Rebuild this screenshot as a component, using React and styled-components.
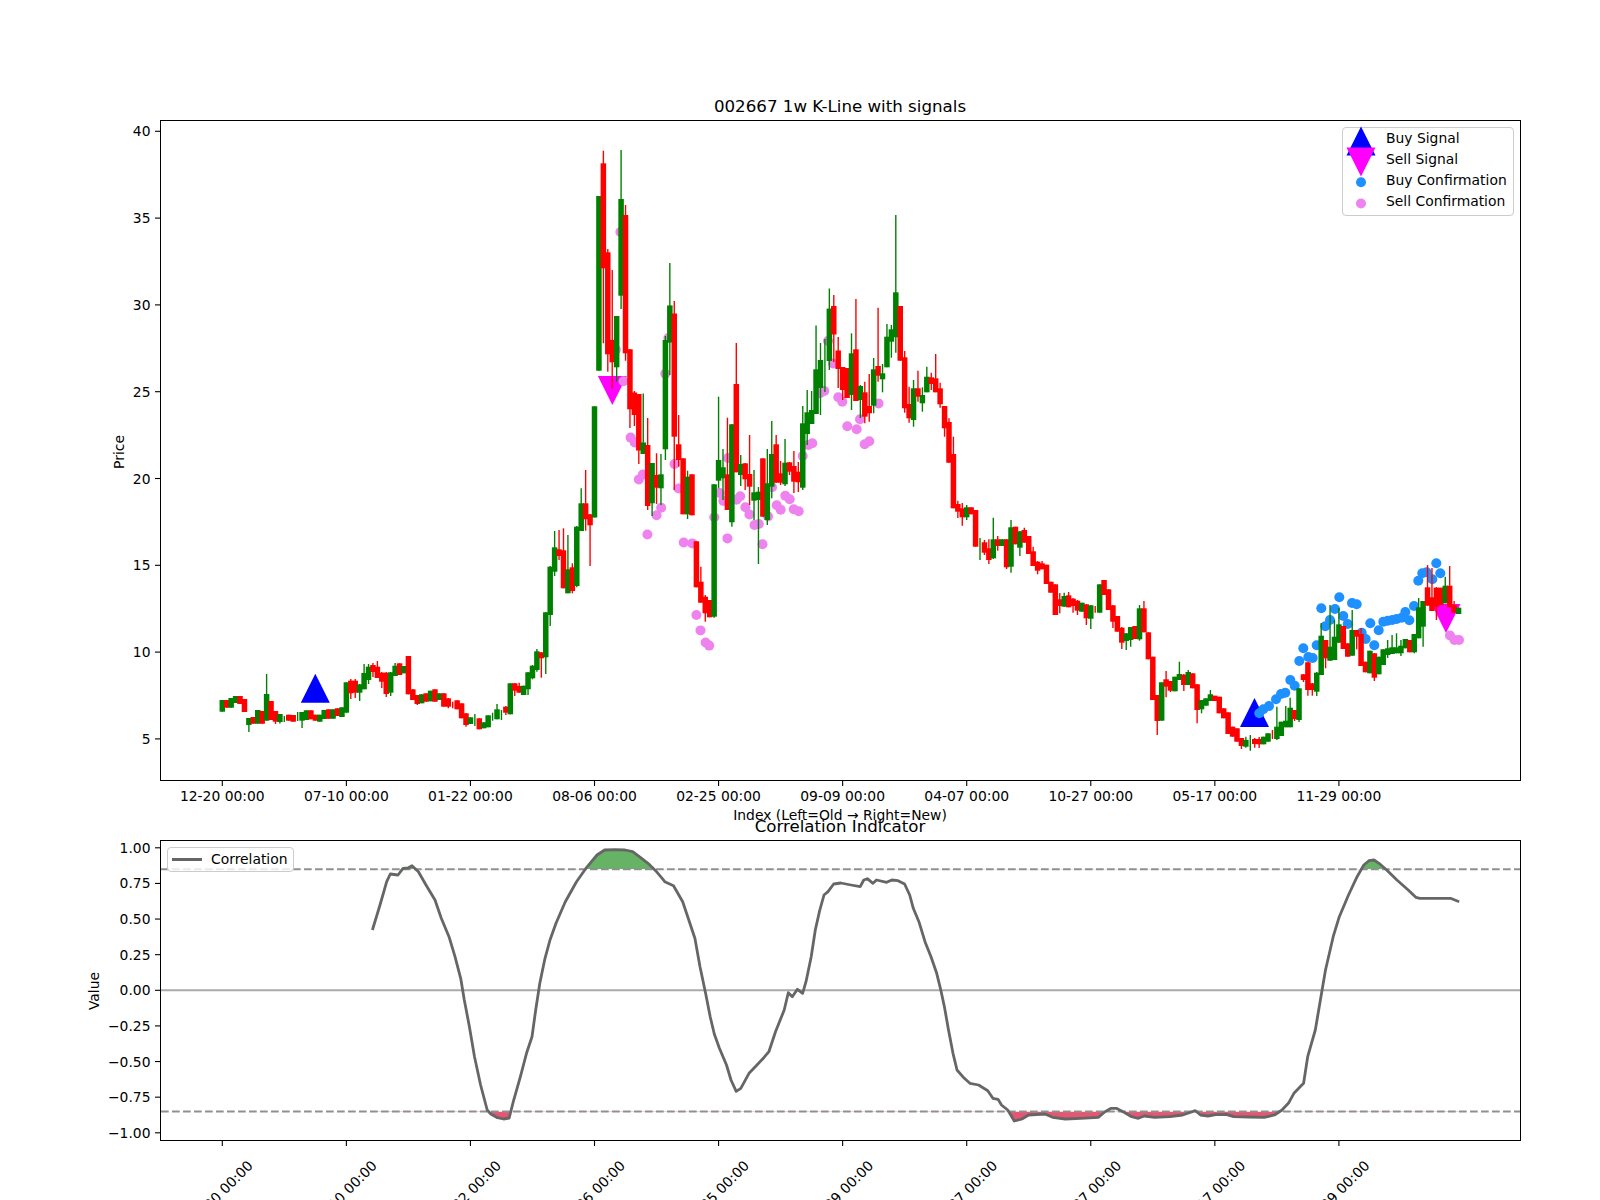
import React from 'react';
import styled, { createGlobalStyle } from 'styled-components';

const GlobalStyle = createGlobalStyle`
  html, body {
    margin: 0;
    padding: 0;
    background: #fff;
  }
`;

// candle x on the page, 280 bars
const barX = (i) => 222.3 + 4.431 * i;

const priceY = (p) => 738.9 - (p - 5) * 17.36;
const valueY = (v) => 990.3 - v * 142.5;

// [colour, body top, body bottom, wick top, wick bottom], all in page pixels
const CANDLES = [
  ['g', 700, 711.7], ['r', 700, 707.7], ['g', 698, 707.7], ['g', 696, 703], ['r', 696, 704],
  ['r', 699, 712], ['g', 718, 725, 718, 732], ['r', 717, 723.7], ['g', 710, 723.7], ['r', 711, 723.7],
  ['g', 694, 720.7, 674], ['r', 701, 720], ['r', 711, 721.7, 711, 724], ['g', 714, 722, 714, 723.5], ['g', 719, 719, 716, 722],
  ['r', 714.7, 720.7], ['r', 715, 721.7], ['g', 716, 716, 712, 721], ['g', 712, 720.7, 712, 728], ['g', 710.3, 720],
  ['r', 710.3, 719.3], ['r', 714.7, 720.7], ['g', 714.7, 721.7], ['g', 710, 719], ['r', 709.3, 718.7],
  ['g', 709.3, 718.7], ['r', 708.3, 716], ['g', 707.3, 717], ['g', 682.3, 712.7], ['r', 680.7, 693.3, 679, 699],
  ['r', 680.7, 692.7, 679, 698], ['g', 684.3, 692.7, 684, 701], ['g', 673, 689.3, 664], ['g', 666.7, 680, 664, 684], ['r', 665, 672, 663, 677],
  ['r', 666.7, 678, 661], ['r', 672.7, 681.7, 672, 688], ['r', 672.7, 694, 672, 697], ['g', 672.3, 692.7, 672, 696], ['g', 665.7, 676, 663],
  ['r', 663.3, 675], ['g', 666, 673.3], ['r', 656, 694.3], ['r', 689.3, 700], ['r', 695, 704, 695, 705],
  ['g', 694.3, 703.3], ['r', 693.3, 701.7], ['g', 690.7, 701.3], ['r', 689.3, 701.7], ['g', 693.3, 700],
  ['r', 693.3, 706.7], ['r', 698.3, 706.7, 698, 708.3], ['r', 704, 704, 701.7, 708.3], ['r', 700.3, 709.3], ['r', 703.3, 718.3],
  ['r', 713.3, 725, 713, 726.7], ['g', 717.3, 724], ['g', 720, 720, 714, 726], ['r', 718.3, 729.3], ['g', 722.3, 728.3],
  ['g', 715.3, 727.3], ['g', 716, 716, 712.7, 720.7], ['g', 709.3, 719.3, 704], ['g', 715, 715, 710, 720], ['r', 706.7, 712.7, 706, 715],
  ['g', 683.3, 714.3], ['r', 683.3, 690.7, 683, 696], ['r', 686, 692.7, 682.7], ['g', 685.7, 695], ['g', 672.3, 689.3, 672, 695],
  ['g', 665.7, 678.3, 665, 679.3], ['g', 651.3, 670, 649, 671.7], ['r', 652.3, 658.3, 652, 677.7], ['g', 612.3, 657.3, 612, 674], ['g', 566.7, 615, 566, 626],
  ['g', 547.3, 571.7, 531, 576], ['r', 549.3, 556, 530, 560], ['r', 550.3, 588.3, 528.3], ['g', 569.3, 593.3, 535], ['r', 567.3, 591, 563.3, 593.3],
  ['g', 526.7, 586, 526, 587.3], ['g', 503.3, 531, 488.3], ['r', 503.3, 519.3, 470, 530.7], ['r', 514.3, 525.3, 514, 566], ['g', 406.3, 517.5],
  ['g', 196, 370.7], ['r', 163.3, 268.3, 150.7, 343.3], ['r', 252.3, 354.3, 249, 371.7], ['r', 340, 362.3, 270, 388.3], ['g', 316, 367.3, 316, 381.7],
  ['g', 199, 295.7, 150, 309], ['r', 215, 353.3, 205, 360.7], ['r', 349.3, 409.3, 349, 428], ['r', 392.5, 415, 391, 426], ['r', 394, 450.5, 394, 464],
  ['g', 442.5, 454, 393.4], ['r', 445, 506, 418, 510], ['g', 463, 503.3, 463, 516], ['r', 475, 487.7, 453.3, 504], ['g', 474.3, 488.3, 454, 505],
  ['g', 340, 449.3, 336, 460], ['g', 305.4, 342.5, 263, 375], ['r', 313.5, 436.7, 301, 490], ['r', 444.3, 460, 415, 466.7], ['r', 458.3, 514.3],
  ['g', 476.7, 514.3, 470.7, 519], ['r', 474.3, 515.3], ['r', 541.3, 587.3], ['r', 581.7, 602.7, 566.7], ['r', 596.7, 613.3, 595, 621.7],
  ['r', 600, 617.3], ['g', 484.3, 616.7, 484, 617.7], ['g', 460, 480.7, 396.7, 488.3], ['g', 467.3, 478.3, 449, 500], ['r', 474.3, 510, 417.7],
  ['g', 424.3, 522.3, 424, 526.7], ['r', 384, 472.3, 343], ['g', 464, 475, 455, 486], ['r', 463.3, 479.3, 463, 490], ['r', 474, 486.7, 435, 505],
  ['g', 492.3, 500.7, 470, 520], ['g', 491.7, 500, 487, 564], ['r', 458.3, 516.7], ['g', 483.3, 520, 449, 525], ['g', 454, 486.7, 421, 498.3],
  ['r', 444.3, 482.7, 435], ['r', 473.3, 482.7, 461, 485], ['g', 462.7, 484.3, 439, 486], ['r', 462.3, 471.7, 462, 475], ['r', 466, 481.7, 451, 493],
  ['r', 471.7, 482.3, 462, 492], ['g', 423.3, 487.7, 406, 490], ['g', 412.3, 434, 390, 445], ['g', 410, 424, 391], ['g', 369.3, 414, 325.5],
  ['g', 360, 388, 343, 415], ['g', 365, 365, 339, 392], ['g', 308.6, 361, 288.5, 370], ['r', 306, 334.5, 295, 362], ['r', 350.5, 369, 337, 388],
  ['r', 367, 390, 367, 400], ['r', 368, 398], ['g', 353.3, 395, 333.3, 410], ['r', 349.3, 401, 299], ['g', 386, 400, 385, 418],
  ['r', 392.3, 416.7, 381.7, 423.3], ['r', 406, 413.3, 374, 421.7], ['g', 369.3, 405.7, 358, 413.3], ['r', 366, 375.7, 307.7, 381.7], ['g', 373.3, 379.3, 364, 392.3],
  ['g', 336.7, 367.3, 324], ['g', 329.3, 341.7, 325, 357.7], ['g', 292.3, 337.3, 215, 352.7], ['r', 306, 360.7], ['r', 357.3, 408.3, 351, 412.7],
  ['r', 404, 418.3, 386.7, 422.7], ['g', 388.3, 420, 380, 426.7], ['r', 388.3, 396.7, 370.7, 401.7], ['g', 395, 403.3, 387.3, 411.7], ['g', 376.7, 392.3, 366.7],
  ['r', 377.3, 384, 372.7, 390], ['r', 378.3, 392.3, 354], ['r', 388.3, 404.3, 382.7, 407.7], ['r', 406, 428.3, 406, 436.7], ['r', 422, 462.7, 418.3],
  ['r', 454, 508.3, 436.7], ['r', 504, 511.7, 500.7, 518], ['r', 508.3, 517.3, 503, 525.7], ['g', 507.3, 517.3, 505, 520], ['r', 507.3, 514.3],
  ['r', 510, 546.7], ['g', 550, 550, 538, 560], ['r', 542.3, 552.7, 540, 555], ['r', 548.3, 560, 539.3, 564], ['g', 539.3, 558.3, 517.7, 559],
  ['r', 539.3, 546, 536, 550.7], ['g', 539.3, 546], ['r', 539.3, 567.3, 539, 569], ['g', 527.3, 566.7, 520, 572.7], ['r', 526.7, 544.3],
  ['g', 531.3, 547.7, 531, 556], ['r', 530, 542.7, 527.7], ['r', 536, 554], ['r', 551.3, 566, 546.7], ['r', 561.7, 570.7, 561, 574.3],
  ['r', 563.3, 569.3, 561], ['r', 564.7, 584], ['r', 581.7, 592.7], ['r', 584.3, 615], ['r', 599.3, 606, 593, 613.3],
  ['g', 596, 606.7, 592.7], ['r', 595.3, 607.3, 592], ['r', 598.7, 606, 598, 612.7], ['r', 600.7, 610.7, 600, 615], ['g', 602.7, 611.7],
  ['r', 604.3, 618.3, 604, 625], ['g', 605.3, 618.7, 605, 629], ['r', 609, 609, 606, 612.7], ['g', 584.3, 612.7], ['r', 580, 595],
  ['r', 589.3, 610], ['r', 605.3, 621.7, 605, 628], ['r', 616, 631.7], ['r', 627.7, 642.7, 627, 649], ['g', 633.3, 641, 633, 650],
  ['g', 627, 640, 627, 646.7], ['r', 626, 639], ['g', 608.3, 639.3, 605, 640.7], ['r', 608.3, 632.3, 601], ['r', 632.3, 659.3],
  ['r', 656.7, 700], ['r', 695, 721, 695, 735], ['g', 682.3, 720.7], ['r', 679.3, 686.7, 671, 697.3], ['r', 681, 690.7, 681, 692],
  ['g', 676.7, 691.3], ['g', 674, 680, 661.7], ['r', 674.7, 685, 674, 691], ['g', 672, 685, 670], ['r', 673.3, 688.3],
  ['r', 684.3, 710, 684, 723.3], ['g', 700, 709.3, 700, 713.3], ['g', 698.3, 705.7], ['g', 694.3, 701, 690], ['r', 695.7, 701],
  ['r', 696.7, 713.3], ['r', 708.3, 718.3], ['r', 712.3, 734], ['r', 726.7, 736.7], ['r', 728.3, 741.7],
  ['r', 738, 746, 738, 749], ['g', 740, 746.7, 736.7, 747.7], ['g', 742, 742, 735, 750.7], ['r', 739, 744, 738, 747.7], ['r', 739, 744.3, 737, 748],
  ['g', 736.7, 744.3], ['g', 733.3, 741.7], ['r', 735, 735, 730, 739], ['g', 726.7, 739, 706.7, 740], ['g', 721.7, 736],
  ['g', 720.7, 727.3, 706], ['g', 707.7, 727.3, 697.7], ['r', 710, 719, 710, 721], ['g', 688.3, 720, 688, 722], ['r', 674.3, 680, 674, 682],
  ['r', 662.3, 690, 662, 695.7], ['r', 683.3, 690, 683, 695.7], ['g', 672.7, 691.7, 672, 696], ['g', 635.7, 675, 623], ['r', 640, 658.3, 640, 668.3],
  ['g', 646.7, 660.7, 605], ['g', 636.7, 660, 620], ['g', 624.3, 642.7, 608], ['r', 626, 649], ['r', 643.3, 656.7],
  ['g', 630, 655.7, 610], ['r', 630, 636.7, 630, 649.3], ['r', 634, 666, 628], ['r', 661.7, 672.3], ['g', 650.7, 673.3],
  ['r', 653.3, 677.7, 653, 681], ['g', 656.7, 674.3], ['g', 649.3, 665], ['g', 648.3, 655, 640, 658], ['g', 647.3, 654, 635],
  ['g', 647.3, 653.3, 633.3], ['g', 645.7, 653.3, 640, 656], ['g', 639, 648.3], ['r', 640, 652.3], ['g', 634, 652.3, 634, 653.3],
  ['g', 607.3, 638.3, 598], ['g', 601, 626.7, 601, 646.7], ['r', 587.3, 605.7, 565], ['r', 597.3, 611, 568], ['r', 587.7, 606.7, 587, 620],
  ['r', 587.7, 605], ['g', 585.7, 603.3, 576.7], ['r', 585.7, 607.3, 566], ['r', 605, 612.7, 601], ['g', 607.7, 614],
];

// confirmation dots on the candle chart, page pixels
const SELL_DOTS = [
  [620.4, 232], [615.8, 349.6], [623.5, 381.3], [630.6, 437.6], [634.7, 442.5], [638.8, 479.5], [642.9, 474.6], [647.4, 534.5],
  [656.6, 515.3], [661.2, 507.7], [665.3, 373.8], [668.4, 338], [674.5, 464], [678.6, 488.5], [683.7, 542.5], [692.3, 543.4],
  [696.4, 615], [700.5, 630.4], [705.6, 642.5], [709.2, 645.6], [714.3, 517.3], [719.6, 493], [723.4, 501], [727.4, 538.4],
  [728, 458], [736.5, 499.8], [740.2, 496.3], [745.4, 507.2], [749.4, 514.4], [754.5, 525], [758.8, 524], [762.5, 544.3],
  [768, 516.4], [772, 487.2], [776.7, 505.3], [780.7, 509.7], [785.3, 495.7], [789.7, 499.3], [793.7, 509.3], [798.7, 511.3],
  [802.7, 456], [808.3, 445], [812.3, 443.3], [820, 393.3], [824.3, 391], [828, 341], [833, 363.5], [838.3, 397.3],
  [842.3, 401.7], [847.3, 426.3], [856.7, 429.3], [860, 419.3], [864.7, 444.3], [869.3, 441.3], [878.5, 403.4],
  [1450, 635.5], [1454.5, 640], [1459, 640],
];

const BUY_DOTS = [
  [1259.3, 713.3], [1263.3, 709.3], [1269, 706], [1276, 699.3], [1281, 694], [1285.3, 692.7], [1290.3, 680], [1294.7, 685.7],
  [1299.3, 661], [1303.3, 648.3], [1308.3, 657], [1312.7, 658], [1316.7, 645.3], [1321.3, 608.3], [1325.3, 626.3], [1330, 620],
  [1335, 609], [1339.3, 597.3], [1343.3, 616], [1347.7, 624], [1352, 603], [1356.7, 604.3], [1361.7, 632.7], [1365.7, 639],
  [1370.3, 623.3], [1374.3, 645.3], [1378.7, 630.3], [1383.3, 621.7], [1387.7, 620.7], [1392.3, 620], [1396.7, 619], [1401.7, 617.7],
  [1405.3, 612], [1409.3, 620.3], [1414, 606], [1418.3, 580.7], [1422.3, 573.3], [1426.7, 572.3], [1432.3, 579.3], [1436.3, 563.3],
  [1440.3, 573.3],
];

// correlation line, page pixels
const CORR = [
  [372.4, 930], [380, 905], [386.7, 881.7], [390.3, 874], [398, 875], [403, 868.3], [408, 868], [412, 865.7], [418.4, 871.7],
  [426, 885], [435, 900], [441.3, 918.3], [449, 936.7], [455, 956.7], [460.7, 978.3], [464.3, 1000], [469.4, 1026.7],
  [474.5, 1056.7], [480.6, 1085], [487.2, 1110], [490.8, 1114], [497.4, 1117.7], [503.6, 1119], [509.2, 1118], [513.3, 1101.7],
  [520.4, 1076.7], [526.5, 1053.3], [532, 1036.7], [535.7, 1010], [539.8, 983.3], [545, 958.3], [550, 940], [556, 923.3],
  [565.3, 901.7], [576.5, 881.7], [586.7, 867.3], [597, 855], [604.6, 850], [614.8, 849.7], [625, 850], [632.7, 851.7],
  [640.3, 857.3], [648, 863.3], [655.6, 870.7], [660.7, 876.7], [664.8, 881.7], [673.5, 885.7], [682.7, 901.7], [688.8, 920],
  [694.9, 938.3], [700, 966.7], [705.6, 993.3], [710.2, 1016.7], [714.3, 1034], [719.4, 1048.3], [726.5, 1065], [731, 1080],
  [736.2, 1091.3], [740.8, 1088.3], [749, 1073.3], [756, 1066], [763.8, 1057.7], [768.9, 1051.7], [775.5, 1031.7], [784.2, 1010],
  [788.3, 992.7], [792.3, 996.7], [797.4, 989.3], [802.6, 993.3], [806, 981.7], [811.2, 956.7], [815.3, 930], [819.4, 911.7],
  [824, 895], [828, 891.7], [833.7, 884], [840.8, 883], [851, 885], [860.2, 886.7], [863.8, 880], [867.3, 878.7], [873, 883.3],
  [876.5, 880], [886.7, 882.3], [891.8, 880], [898, 880.7], [904.6, 884], [909.7, 895], [913.3, 908.3], [918.9, 921.7],
  [925, 941.7], [931, 956.7], [936.7, 973.3], [940.8, 990], [944.4, 1006.7], [948.5, 1030], [953, 1053.3], [957, 1070],
  [964.3, 1078.3], [969.9, 1083.3], [978.6, 1085], [987.8, 1090.7], [992.9, 1098.3], [998, 1099.3], [1001.5, 1105], [1007.7, 1110],
  [1014.3, 1121], [1022, 1119], [1028.6, 1115], [1044.9, 1114], [1052.6, 1117.3], [1065.3, 1119], [1080.6, 1118.3], [1098.5, 1117.3],
  [1105, 1111.7], [1111.2, 1108.3], [1116.3, 1108.3], [1124, 1112.3], [1131.6, 1116.7], [1138.3, 1118.3], [1144.4, 1116], [1154.6, 1117.3],
  [1169.9, 1116.7], [1182.7, 1115], [1195.4, 1110.7], [1200.5, 1115], [1208, 1116], [1215.8, 1114.7], [1226, 1114.3], [1233.7, 1116.7],
  [1249, 1117], [1264.3, 1117.3], [1274.5, 1115], [1282, 1110], [1288.8, 1102.7], [1293.9, 1093.3], [1303.6, 1083.3], [1307.7, 1056.7],
  [1315.3, 1030], [1320.4, 1000], [1325.5, 970], [1333.2, 936.7], [1339.3, 916.7], [1348.5, 895], [1357.1, 876.7], [1363.8, 865],
  [1368.9, 860.7], [1374, 860], [1379, 863.3], [1386.7, 870], [1396.9, 880], [1408.2, 890], [1415.8, 897.3], [1419.9, 898.3],
  [1450.5, 898.3], [1459.2, 901.7],
];

const DATE_LABELS = [
  '12-20 00:00', '07-10 00:00', '01-22 00:00', '08-06 00:00', '02-25 00:00',
  '09-09 00:00', '04-07 00:00', '10-27 00:00', '05-17 00:00', '11-29 00:00',
];
const PRICE_TICKS = [5, 10, 15, 20, 25, 30, 35, 40];
const VALUE_TICKS = [1, 0.75, 0.5, 0.25, 0, -0.25, -0.5, -0.75, -1];

const COLORS = { g: '#008000', r: '#ff0000' };
const UPPER_THRESHOLD = valueY(0.85);
const LOWER_THRESHOLD = valueY(-0.85);

const Figure = styled.div`
  width: 1600px;
  height: 1200px;
  overflow: hidden;
  background: #fff;
  color: #000;
  font-family: "DejaVu Sans", "Liberation Sans", sans-serif;
  display: flex;
  flex-direction: column;
`;

const Title = styled.div`
  width: 1360px;
  height: ${(props) => props.$height}px;
  margin-left: 160px;
  padding-bottom: 3px;
  box-sizing: border-box;
  display: flex;
  align-items: flex-end;
  justify-content: center;
  font-size: 16.67px;
  line-height: 20px;
  position: relative;
  z-index: 1;
`;

const PlotFrame = styled.div`
  position: relative;
  width: 1359px;
  height: ${(props) => props.$height}px;
  margin-left: 160px;
  border: 1px solid #000;
`;

const PlotSvg = styled.svg`
  display: block;
  overflow: visible;
`;

const AxisText = styled.text`
  font-family: "DejaVu Sans", "Liberation Sans", sans-serif;
  font-size: 13.89px;
  fill: #000;
`;

const Legend = styled.div`
  position: absolute;
  top: 6px;
  ${(props) => (props.$side === 'right' ? 'right: 6px;' : 'left: 6px;')}
  box-sizing: border-box;
  width: ${(props) => props.$width}px;
  height: ${(props) => props.$height}px;
  border: 1px solid #ccc;
  border-radius: 4px;
  background: rgba(255, 255, 255, 0.8);
  display: flex;
  flex-direction: column;
  justify-content: ${(props) => (props.$side === 'right' ? 'flex-start' : 'center')};
`;

const LegendRow = styled.div`
  height: 20.9px;
  flex: none;
  display: flex;
  align-items: center;
  font-size: 13.89px;
  line-height: 20.9px;
  white-space: nowrap;
`;

const MarkerCell = styled.svg`
  flex: none;
  width: 43px;
  height: 21px;
  overflow: visible;
`;

const LegendLine = styled.span`
  flex: none;
  width: 30px;
  height: 3px;
  margin: 0 9px 0 4px;
  background: #666;
`;

const Candle = ({ bar, index }) => {
  const [color, top, bottom, high = top, low = bottom] = bar;
  const x = barX(index);
  return (
    <g>
      <line x1={x} x2={x} y1={high} y2={low} stroke={COLORS[color]} strokeWidth="1.39" />
      {bottom > top && <rect x={x - 2.75} y={top} width="5.5" height={bottom - top} fill={COLORS[color]} />}
    </g>
  );
};

const Triangle = ({ x, y, down, color }) => {
  const pts = down
    ? `${x - 14.5},${y} ${x + 14.5},${y} ${x},${y + 29}`
    : `${x},${y} ${x - 14.5},${y + 29} ${x + 14.5},${y + 29}`;
  return <polygon points={pts} fill={color} />;
};

const XTicks = ({ y }) =>
  DATE_LABELS.map((_, k) => {
    const x = barX(28 * k);
    return <line key={k} x1={x} x2={x} y1={y} y2={y + 5} stroke="#000" strokeWidth="1.1" />;
  });

const YTick = ({ y, label }) => (
  <g>
    <line x1="155" x2="160" y1={y} y2={y} stroke="#000" strokeWidth="1.1" />
    <AxisText x="150.5" y={y} textAnchor="end" dominantBaseline="central">{label}</AxisText>
  </g>
);

const CandlePlot = () => (
  <PlotFrame $height={659}>
    <PlotSvg width="1359" height="659" viewBox="161 121 1359 659">
      {PRICE_TICKS.map((p) => <YTick key={p} y={priceY(p)} label={p} />)}
      <XTicks y={781} />
      {DATE_LABELS.map((label, k) => (
        <AxisText key={label} x={barX(28 * k)} y="801" textAnchor="middle">{label}</AxisText>
      ))}
      <AxisText x="840" y="820" textAnchor="middle">Index (Left=Old → Right=New)</AxisText>
      <AxisText transform="translate(119 452) rotate(-90)" textAnchor="middle" dominantBaseline="central">Price</AxisText>

      <Triangle x={315.3} y={673.7} color="#0000ff" />
      <Triangle x={612.4} y={376} down color="#ff00ff" />
      <Triangle x={1254.5} y={698} color="#0000ff" />
      <Triangle x={1446} y={604} down color="#ff00ff" />
      {BUY_DOTS.map(([x, y]) => <circle key={`${x}-${y}`} cx={x} cy={y} r="5" fill="#1e90ff" />)}
      {SELL_DOTS.map(([x, y]) => <circle key={`${x}-${y}`} cx={x} cy={y} r="5" fill="#ee82ee" />)}
      {CANDLES.map((bar, i) => <Candle key={i} bar={bar} index={i} />)}
    </PlotSvg>
    <Legend $side="right" $width={172} $height={89}>
      <LegendRow>
        <MarkerCell viewBox="0 -10.5 43 21"><polygon points="18,-12 3.5,17 32.5,17" fill="#0000ff" /></MarkerCell>
        Buy Signal
      </LegendRow>
      <LegendRow>
        <MarkerCell viewBox="0 -10.5 43 21"><polygon points="3.5,-12 32.5,-12 18,17" fill="#ff00ff" /></MarkerCell>
        Sell Signal
      </LegendRow>
      <LegendRow>
        <MarkerCell viewBox="0 -10.5 43 21"><circle cx="18" cy="1.8" r="5" fill="#1e90ff" /></MarkerCell>
        Buy Confirmation
      </LegendRow>
      <LegendRow>
        <MarkerCell viewBox="0 -10.5 43 21"><circle cx="18" cy="2" r="5" fill="#ee82ee" /></MarkerCell>
        Sell Confirmation
      </LegendRow>
    </Legend>
  </PlotFrame>
);

const CorrelationPlot = () => {
  const line = CORR.map(([x, y]) => `${x},${y}`).join(' ');
  const first = CORR[0][0];
  const last = CORR[CORR.length - 1][0];
  return (
    <PlotFrame $height={299}>
      <PlotSvg width="1359" height="299" viewBox="161 841 1359 299">
        <defs>
          <clipPath id="above"><rect x="161" y="841" width="1359" height={UPPER_THRESHOLD - 841} /></clipPath>
          <clipPath id="below"><rect x="161" y={LOWER_THRESHOLD} width="1359" height={1140 - LOWER_THRESHOLD} /></clipPath>
        </defs>
        {VALUE_TICKS.map((v) => (
          <YTick key={v} y={valueY(v)} label={v.toFixed(2).replace('-', '−')} />
        ))}
        <XTicks y={1141} />
        {DATE_LABELS.map((label, k) => (
          <AxisText
            key={label}
            transform={`translate(${barX(28 * k) - 2} 1193) rotate(-45)`}
            textAnchor="middle"
            dominantBaseline="central"
          >
            {label}
          </AxisText>
        ))}
        <AxisText transform="translate(94 991) rotate(-90)" textAnchor="middle" dominantBaseline="central">Value</AxisText>

        <polygon points={`${first},${UPPER_THRESHOLD} ${line} ${last},${UPPER_THRESHOLD}`} fill="#008000" fillOpacity="0.6" clipPath="url(#above)" />
        <polygon points={`${first},${LOWER_THRESHOLD} ${line} ${last},${LOWER_THRESHOLD}`} fill="#dc143c" fillOpacity="0.72" clipPath="url(#below)" />
        <line x1="161" x2="1520" y1={valueY(0)} y2={valueY(0)} stroke="#aaa" strokeWidth="2" />
        <line x1="161" x2="1520" y1={UPPER_THRESHOLD} y2={UPPER_THRESHOLD} stroke="#909090" strokeWidth="2" strokeDasharray="7.7 3.3" />
        <line x1="161" x2="1520" y1={LOWER_THRESHOLD} y2={LOWER_THRESHOLD} stroke="#909090" strokeWidth="2" strokeDasharray="7.7 3.3" />
        <polyline points={line} fill="none" stroke="#666" strokeWidth="2.8" strokeLinejoin="round" />
      </PlotSvg>
      <Legend $side="left" $width={127} $height={25}>
        <LegendRow>
          <LegendLine />
          Correlation
        </LegendRow>
      </Legend>
    </PlotFrame>
  );
};

const App = () => (
  <Figure>
    <GlobalStyle />
    <Title $height={120}>002667 1w K-Line with signals</Title>
    <CandlePlot />
    <Title $height={59}>Correlation Indicator</Title>
    <CorrelationPlot />
  </Figure>
);

export default App;
